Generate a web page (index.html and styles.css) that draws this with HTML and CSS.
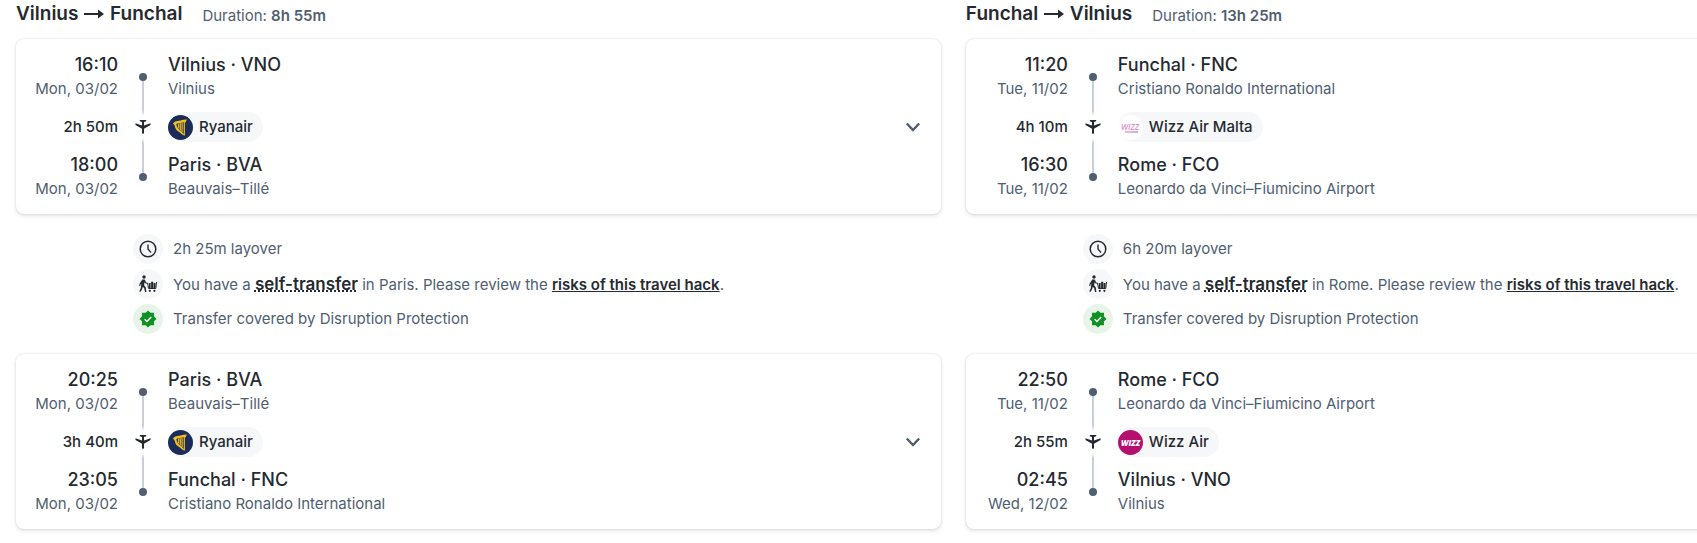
FILE: index.html
```html
<!DOCTYPE html>
<html lang="en">
    <head>
        <meta charset="UTF-8">
        <meta name="viewport" content="width=device-width, initial-scale=1.0">
        <title>Vilnius - Funchal</title>
        <link rel="stylesheet" href="styles.css">
    </head>
    <body>
        <svg class="sprite" aria-hidden="true">
            <symbol id="arrow" viewBox="0 0 22 12">
                <path d="M1 6h18" fill="none" stroke="currentColor" stroke-width="2"/>
                <path d="M15 1.5L21 6l-6 4.500z" fill="currentColor"/>
            </symbol>
            <symbol id="plane" viewBox="0 0 16 16">
                <path d="M4.800 1h6.400v1.200L9 3v3.500l6.500-2.300v1.700L9 9.700V14l-1 1.200L7 14V9.700L.5 5.900V4.200L7 6.500V3l-2.200-.8z" fill="currentColor"/>
            </symbol>
            <symbol id="chevron" viewBox="0 0 24 24">
                <path d="M5.800 8.500l6.200 6.500 6.200-6.500" fill="none" stroke="currentColor" stroke-width="2.400"/>
            </symbol>
            <symbol id="clock" viewBox="0 0 18 18">
                <circle cx="9" cy="9" r="7.800" fill="none" stroke="currentColor" stroke-width="1.500"/>
                <path d="M9 4.500V9l3 3.600" fill="none" stroke="currentColor" stroke-width="1.400"/>
            </symbol>
            <symbol id="transfer" viewBox="0 0 18 18">
                <circle cx="5" cy="2" r="1.700" fill="currentColor"/>
                <path d="M3.300 4.400h2.400l1.500 3 2.200.6-.3 1-2.900-.7-.7-1-.4 2.900 1.700 2.400.6 4.400H6l-.8-3.700-1.400-1.500-.8 2.600L1.400 17 .3 16.200l1.500-2.900.6-4.700-.8.800-.4 1.800-1-.2.5-2.500z" fill="currentColor"/>
                <path d="M9.900 8h1.700v5H9.900zM12.100 6.800h2.100V13h-2.100zM14.600 8h1.900v5h-1.900z" fill="currentColor"/>
                <path d="M8.600 8.500l1 5h7.200l.7-6.500" fill="none" stroke="currentColor"/>
                <circle cx="10.800" cy="15.800" r="1.100" fill="currentColor"/>
                <circle cx="15.400" cy="15.800" r="1.100" fill="currentColor"/>
            </symbol>
            <symbol id="covered" viewBox="0 0 18 18">
                <path d="M9 .5l2.400 2.300 3.600-.1-.1 3.500L17.500 9l-2.600 2.500.1 3.800-3.600-.1L9 17.500l-2.400-2.300-3.600.1.1-3.800L.5 9l2.600-2.800L3 2.700l3.600.1z" fill="currentColor"/>
                <path d="M5.600 9.300l2.300 2.200 4.300-4.600" fill="none" stroke="#fff" stroke-width="1.500"/>
            </symbol>
            <symbol id="ryanair" viewBox="0 0 25 25">
                <circle cx="12.500" cy="12.500" r="12.500" fill="#1b2b5c"/>
                <path d="M5 8.500c1.800-2.600 4.200-2.400 6.200-2.700 2.300-.3 4-1.500 7.600-1.300l-1.200 3c-3-.5-4.500.6-6.700.8-1.300 0-2.200.2-2.500 1 .2 2.500 1.500 4.300 3.100 5.700 1.600 1.500 4 2.800 5.600 6-2.900-1.200-4.500-2.500-5.800-4-2.600-1.200-4.300-3.500-4.500-6.300z" fill="#f5c01c"/>
                <path d="M10.500 8.500v5M12.300 8.300v7.200M14.100 7.500v9.500M16.300 7v13" fill="none" stroke="#e3b222" stroke-width="1.300"/>
            </symbol>
            <symbol id="wizz" viewBox="0 0 25 25">
                <circle cx="12.500" cy="12.500" r="12.500" fill="#b5106f"/>
                <text x="12.500" y="16" text-anchor="middle" class="logo-text" fill="#fff">WIZZ</text>
            </symbol>
            <symbol id="wizz-malta" viewBox="0 0 25 25">
                <circle cx="12.500" cy="12.500" r="12.500" fill="#fff"/>
                <text x="12" y="15" text-anchor="middle" class="logo-text-light" fill="#e08fcb">WIZZ</text>
                <path d="M7 17h7" stroke="#ee9ac6" stroke-width="1.500"/>
                <path d="M14 17h6" stroke="#aaa2da" stroke-width="1.500"/>
            </symbol>
        </svg>

        <main class="trips">
            <section class="trip">
                <header class="trip-header">
                    <h2 class="route">Vilnius <svg class="arrow" role="img" aria-label="to"><use href="#arrow"/></svg> Funchal</h2>
                    <p class="duration">Duration: <b>8h 55m</b></p>
                </header>

                <article class="card">
                    <div class="times">
                        <div class="stop"><time class="hour">16:10</time><span class="small">Mon, 03/02</span></div>
                        <span class="length">2h 50m</span>
                        <div class="stop"><time class="hour">18:00</time><span class="small">Mon, 03/02</span></div>
                    </div>
                    <div class="track">
                        <span class="dot"></span><span class="line"></span>
                        <svg class="plane"><use href="#plane"/></svg>
                        <span class="line line-up"></span><span class="dot"></span>
                    </div>
                    <div class="places">
                        <div class="stop"><span class="city">Vilnius · VNO</span><span class="small">Vilnius</span></div>
                        <span class="airline"><svg class="logo"><use href="#ryanair"/></svg>Ryanair</span>
                        <div class="stop"><span class="city">Paris · BVA</span><span class="small">Beauvais–Tillé</span></div>
                    </div>
                    <button class="toggle" aria-label="Show details"><svg class="chevron"><use href="#chevron"/></svg></button>
                </article>

                <ul class="notes">
                    <li class="note"><span class="badge"><svg class="icon"><use href="#clock"/></svg></span><span>2h 25m layover</span></li>
                    <li class="note"><span class="badge"><svg class="icon"><use href="#transfer"/></svg></span><span>You have a <button class="term">self-transfer</button> in Paris. Please review the <a class="risks" href="#risks">risks of this travel hack</a>.</span></li>
                    <li class="note"><span class="badge badge-green"><svg class="icon"><use href="#covered"/></svg></span><span>Transfer covered by Disruption Protection</span></li>
                </ul>

                <article class="card">
                    <div class="times">
                        <div class="stop"><time class="hour">20:25</time><span class="small">Mon, 03/02</span></div>
                        <span class="length">3h 40m</span>
                        <div class="stop"><time class="hour">23:05</time><span class="small">Mon, 03/02</span></div>
                    </div>
                    <div class="track">
                        <span class="dot"></span><span class="line"></span>
                        <svg class="plane"><use href="#plane"/></svg>
                        <span class="line line-up"></span><span class="dot"></span>
                    </div>
                    <div class="places">
                        <div class="stop"><span class="city">Paris · BVA</span><span class="small">Beauvais–Tillé</span></div>
                        <span class="airline"><svg class="logo"><use href="#ryanair"/></svg>Ryanair</span>
                        <div class="stop"><span class="city">Funchal · FNC</span><span class="small">Cristiano Ronaldo International</span></div>
                    </div>
                    <button class="toggle" aria-label="Show details"><svg class="chevron"><use href="#chevron"/></svg></button>
                </article>
            </section>

            <section class="trip">
                <header class="trip-header">
                    <h2 class="route">Funchal <svg class="arrow" role="img" aria-label="to"><use href="#arrow"/></svg> Vilnius</h2>
                    <p class="duration">Duration: <b>13h 25m</b></p>
                </header>

                <article class="card">
                    <div class="times">
                        <div class="stop"><time class="hour">11:20</time><span class="small">Tue, 11/02</span></div>
                        <span class="length">4h 10m</span>
                        <div class="stop"><time class="hour">16:30</time><span class="small">Tue, 11/02</span></div>
                    </div>
                    <div class="track">
                        <span class="dot"></span><span class="line"></span>
                        <svg class="plane"><use href="#plane"/></svg>
                        <span class="line line-up"></span><span class="dot"></span>
                    </div>
                    <div class="places">
                        <div class="stop"><span class="city">Funchal · FNC</span><span class="small">Cristiano Ronaldo International</span></div>
                        <span class="airline"><svg class="logo"><use href="#wizz-malta"/></svg>Wizz Air Malta</span>
                        <div class="stop"><span class="city">Rome · FCO</span><span class="small">Leonardo da Vinci–Fiumicino Airport</span></div>
                    </div>
                </article>

                <ul class="notes">
                    <li class="note"><span class="badge"><svg class="icon"><use href="#clock"/></svg></span><span>6h 20m layover</span></li>
                    <li class="note"><span class="badge"><svg class="icon"><use href="#transfer"/></svg></span><span>You have a <button class="term">self-transfer</button> in Rome. Please review the <a class="risks" href="#risks">risks of this travel hack</a>.</span></li>
                    <li class="note"><span class="badge badge-green"><svg class="icon"><use href="#covered"/></svg></span><span>Transfer covered by Disruption Protection</span></li>
                </ul>

                <article class="card">
                    <div class="times">
                        <div class="stop"><time class="hour">22:50</time><span class="small">Tue, 11/02</span></div>
                        <span class="length">2h 55m</span>
                        <div class="stop"><time class="hour">02:45</time><span class="small">Wed, 12/02</span></div>
                    </div>
                    <div class="track">
                        <span class="dot"></span><span class="line"></span>
                        <svg class="plane"><use href="#plane"/></svg>
                        <span class="line line-up"></span><span class="dot"></span>
                    </div>
                    <div class="places">
                        <div class="stop"><span class="city">Rome · FCO</span><span class="small">Leonardo da Vinci–Fiumicino Airport</span></div>
                        <span class="airline"><svg class="logo"><use href="#wizz"/></svg>Wizz Air</span>
                        <div class="stop"><span class="city">Vilnius · VNO</span><span class="small">Vilnius</span></div>
                    </div>
                </article>
            </section>
        </main>
    </body>
</html>
```
FILE: styles.css
```css
* {
    box-sizing:border-box;
}
body {
    margin:0;
    background:#fff;
    color:#252a31;
    font-family:Inter, "Liberation Sans", sans-serif;
    font-size:15px;
    line-height:24px;
}
.sprite {
    display:none;
}
.trips {
    display:flex;
    gap:25px;
    min-height:100vh;
    padding:0 16px;
    overflow:hidden;
}
.trip {
    flex:0 0 54.5vw;
}
.trip-header {
    display:flex;
    gap:20px;
    height:39px;
    align-items:flex-start;
    padding-top:2px;
}
.route {
    margin:0;
    font-size:19px;
    font-weight:600;
}
.arrow {
    width:22px;
    height:12px;
}
.duration {
    margin:0;
    color:#4f5e71;
    line-height:28px;
}
.duration b {
    font-weight:600;
}
.card {
    display:grid;
    grid-template-columns:86px 50px 1fr 24px;
    padding:14px 16px 13px;
    border-radius:8px;
    background:#fff;
    box-shadow:0 0 2px rgba(37,42,49,.16), 0 2px 4px rgba(37,42,49,.12);
}
.times,
.places {
    display:flex;
    flex-direction:column;
    gap:11px;
    white-space:nowrap;
}
.times {
    align-items:flex-end;
    text-align:right;
}
.places {
    align-items:flex-start;
}
.stop {
    display:flex;
    flex-direction:column;
}
.hour,
.city {
    font-size:18px;
    font-weight:500;
}
.small {
    color:#4f5e71;
}
.length {
    font-weight:500;
    line-height:30px;
}
.airline {
    display:flex;
    align-items:center;
    gap:6px;
    height:30px;
    padding-right:10px;
    border-radius:15px;
    background:#f5f7f9;
    font-weight:500;
}
.logo {
    width:25px;
    height:25px;
}
.logo-text,
.logo-text-light {
    font-family:"Open Sans", sans-serif;
    font-size:8px;
    font-style:italic;
    font-weight:800;
}
.logo-text-light {
    font-weight:600;
}
.track {
    display:flex;
    flex-direction:column;
    align-items:center;
    padding:20px 0;
}
.dot {
    width:8px;
    height:8px;
    border-radius:50%;
    background:#4f5e71;
}
.line {
    flex:1;
    width:2px;
    background:linear-gradient(#c5d0dc 85%, #fff);
}
.line-up {
    background:linear-gradient(#fff, #c5d0dc 15%);
}
.plane {
    width:16px;
    height:16px;
    margin:3px 0;
}
.toggle {
    align-self:center;
    width:24px;
    height:24px;
    padding:0;
    border:none;
    background:none;
    color:#4f5e71;
    cursor:pointer;
}
.chevron {
    display:block;
    width:24px;
    height:24px;
}
.notes {
    display:flex;
    flex-direction:column;
    gap:5px;
    margin:0;
    padding:20px 0 20px 117px;
    list-style:none;
    color:#4f5e71;
}
.note {
    display:flex;
    align-items:center;
    gap:10px;
    height:30px;
    white-space:nowrap;
}
.badge {
    display:flex;
    align-items:center;
    justify-content:center;
    width:30px;
    height:30px;
    border-radius:50%;
    background:#f5f7f9;
    color:#252a31;
}
.badge-green {
    background:#e8f4ea;
    color:#0d9222;
}
.icon {
    width:18px;
    height:18px;
}
.term {
    padding:0;
    border:none;
    background:none;
    color:#252a31;
    font:inherit;
    font-size:17px;
    font-weight:600;
    text-decoration:underline dotted 2px;
    cursor:pointer;
}
.risks {
    color:#252a31;
    font-weight:600;
}
```
